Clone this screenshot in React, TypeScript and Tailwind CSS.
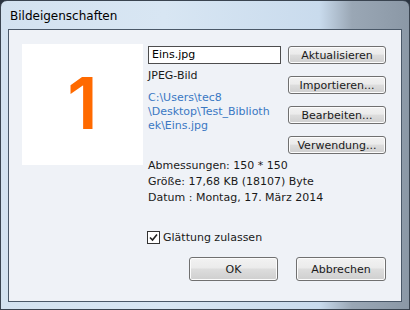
import React from "react";

function WinButton({ label, className }: { label: string; className: string }) {
  return (
    <button
      type="button"
      className={`flex items-center justify-center rounded-[3px] border border-[#707070] bg-[linear-gradient(to_bottom,#f2f2f2_0%,#ebebeb_45%,#dddddd_50%,#cfcfcf_100%)] text-[11px] leading-none text-[#1a1a1a] shadow-[inset_0_0_0_1px_#fcfcfc] ${className}`}
    >
      {label}
    </button>
  );
}

export default function App() {
  return (
    <div className="h-[310px] w-[410px] overflow-hidden bg-[#2b3440] font-['DejaVu_Sans',sans-serif]">
      <div className="flex h-full w-full flex-col rounded-t-[7px] border border-[#3a4450] bg-[linear-gradient(to_right,#d3e2f0_0%,#d8e6f3_40%,#c9dbed_78%,#9aa7b5_86%,#8b98a6_100%)] px-[7px] pb-[7px]">
        <div className="flex h-[28px] shrink-0 items-center pl-[2px] pt-[2px] text-[12px] text-black">
          Bildeigenschaften
        </div>
        <div className="flex flex-1 flex-col border border-[#4a5868] bg-[#eff2f7] pl-[13px] pt-[14px]">
          <div className="flex items-start">
            <div className="flex h-[121px] w-[121px] shrink-0 items-center justify-center bg-white font-['Inter',sans-serif] text-[72px] font-semibold leading-none text-[#ff6a00]">
              <span className="-mt-[3px]">1</span>
            </div>
            <div className="ml-[5px] flex w-[238px] flex-col pt-[2px]">
              <div className="flex">
                <div className="flex w-[133px] flex-col">
                  <div className="flex h-[18px] items-center border border-[#4d4d4d] bg-white pl-[3px] text-[11px] text-black">
                    Eins.jpg
                  </div>
                  <div className="mt-[4px] h-[15px] text-[11px] leading-[15px] text-[#1a1a1a]">JPEG-Bild</div>
                  <div className="mt-[8px] break-all text-[11px] leading-[14px] text-[#3a78c3]">
                    C:\Users\tec8
                    <br />
                    \Desktop\Test_Biblioth
                    <br />
                    ek\Eins.jpg
                  </div>
                </div>
                <div className="ml-[7px] flex w-[98px] flex-col gap-[12px]">
                  <WinButton label="Aktualisieren" className="h-[18px] w-[98px]" />
                  <WinButton label="Importieren..." className="h-[18px] w-[98px]" />
                  <WinButton label="Bearbeiten..." className="h-[18px] w-[98px]" />
                  <WinButton label="Verwendung..." className="h-[18px] w-[98px]" />
                </div>
              </div>
              <div className="mt-[4px] text-[11px] leading-[16px] text-[#1a1a1a]">
                <div>Abmessungen: 150 * 150</div>
                <div>Größe: 17,68 KB (18107) Byte</div>
                <div>Datum : Montag, 17. März 2014</div>
              </div>
              <div className="mt-[25px] flex h-[13px] items-center">
                <span className="-ml-[1px] flex h-[13px] w-[13px] items-center justify-center border border-[#333] bg-white">
                  <svg width="9" height="9" viewBox="0 0 9 9">
                    <path d="M1 4.5 L3.5 7 L8 1.5" fill="none" stroke="#222" strokeWidth="1.6" />
                  </svg>
                </span>
                <span className="ml-[3px] text-[11px] leading-none text-[#1a1a1a]">Glättung zulassen</span>
              </div>
              <div className="mt-[13px] flex justify-end gap-[18px]">
                <WinButton label="OK" className="h-[24px] w-[89px]" />
                <WinButton label="Abbrechen" className="h-[24px] w-[90px]" />
              </div>
            </div>
          </div>
        </div>
      </div>
    </div>
  );
}
